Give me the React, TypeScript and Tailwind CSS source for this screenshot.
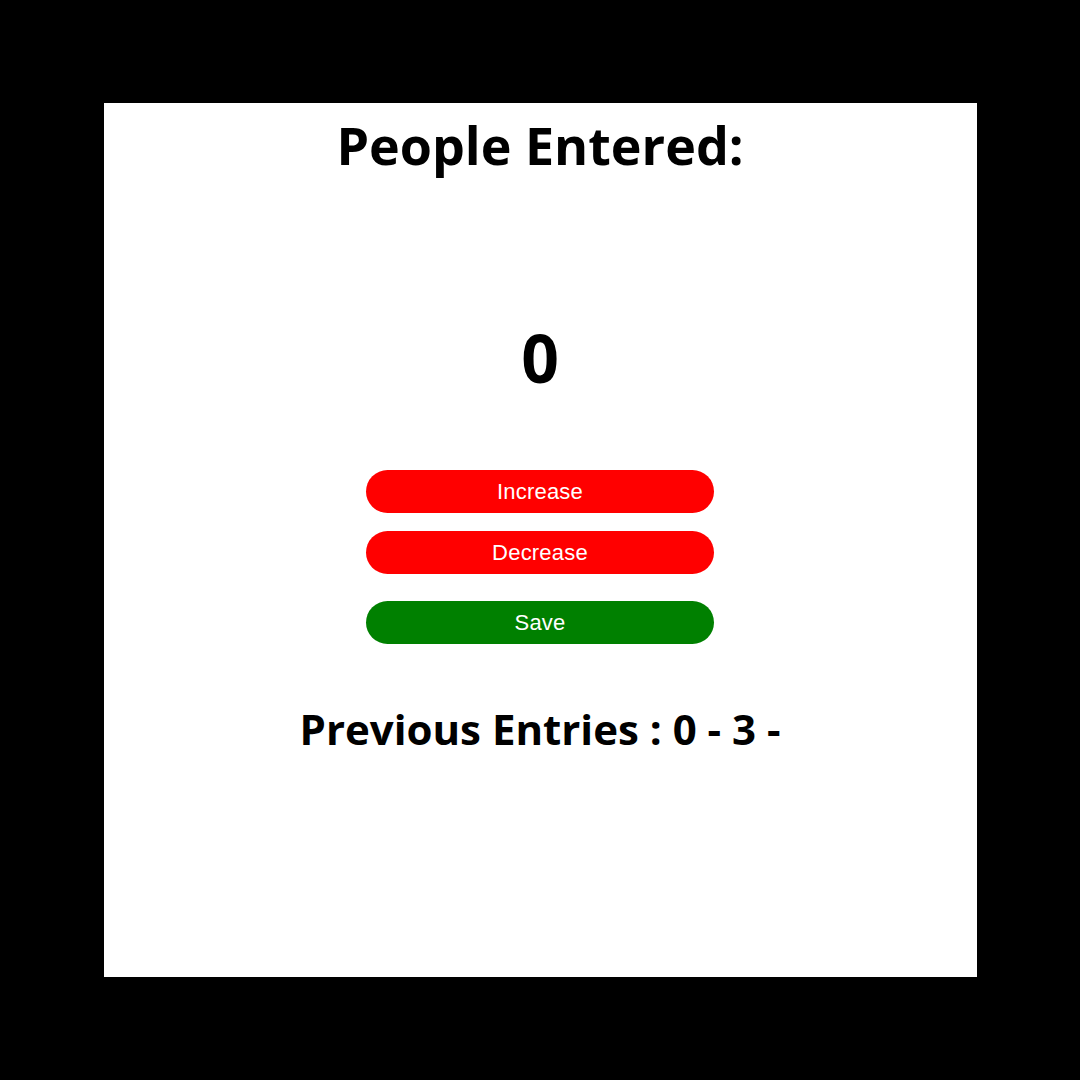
import React from 'react';

const entries = [0, 3];

export default function App() {
  return (
    <div className="w-[1080px] h-[1080px] bg-black flex items-center justify-center">
      <div className="w-[873px] h-[874px] bg-white flex flex-col items-center text-black font-['Open_Sans',sans-serif]">
        <h1 className="mt-[6px] text-[52px] font-bold leading-[72px]">People Entered:</h1>
        <div className="mt-[136px] text-[66px] font-bold leading-[80px]">0</div>
        <div className="mt-[73px] flex flex-col items-center w-[348px] font-['Liberation_Sans',Arial,sans-serif]">
          <button className="w-full h-[43px] rounded-full bg-[#ff0000] text-white text-[22px] tracking-[0.2px]">Increase</button>
          <button className="mt-[18px] w-full h-[43px] rounded-full bg-[#ff0000] text-white text-[22px] tracking-[0.2px]">Decrease</button>
          <button className="mt-[27px] w-full h-[43px] rounded-full bg-[#008000] text-white text-[22px] tracking-[0.2px]">Save</button>
        </div>
        <h2 className="mt-[56px] text-[42px] font-bold leading-[58px]">
          Previous Entries : {entries.map((n) => `${n} - `).join('')}
        </h2>
      </div>
    </div>
  );
}
